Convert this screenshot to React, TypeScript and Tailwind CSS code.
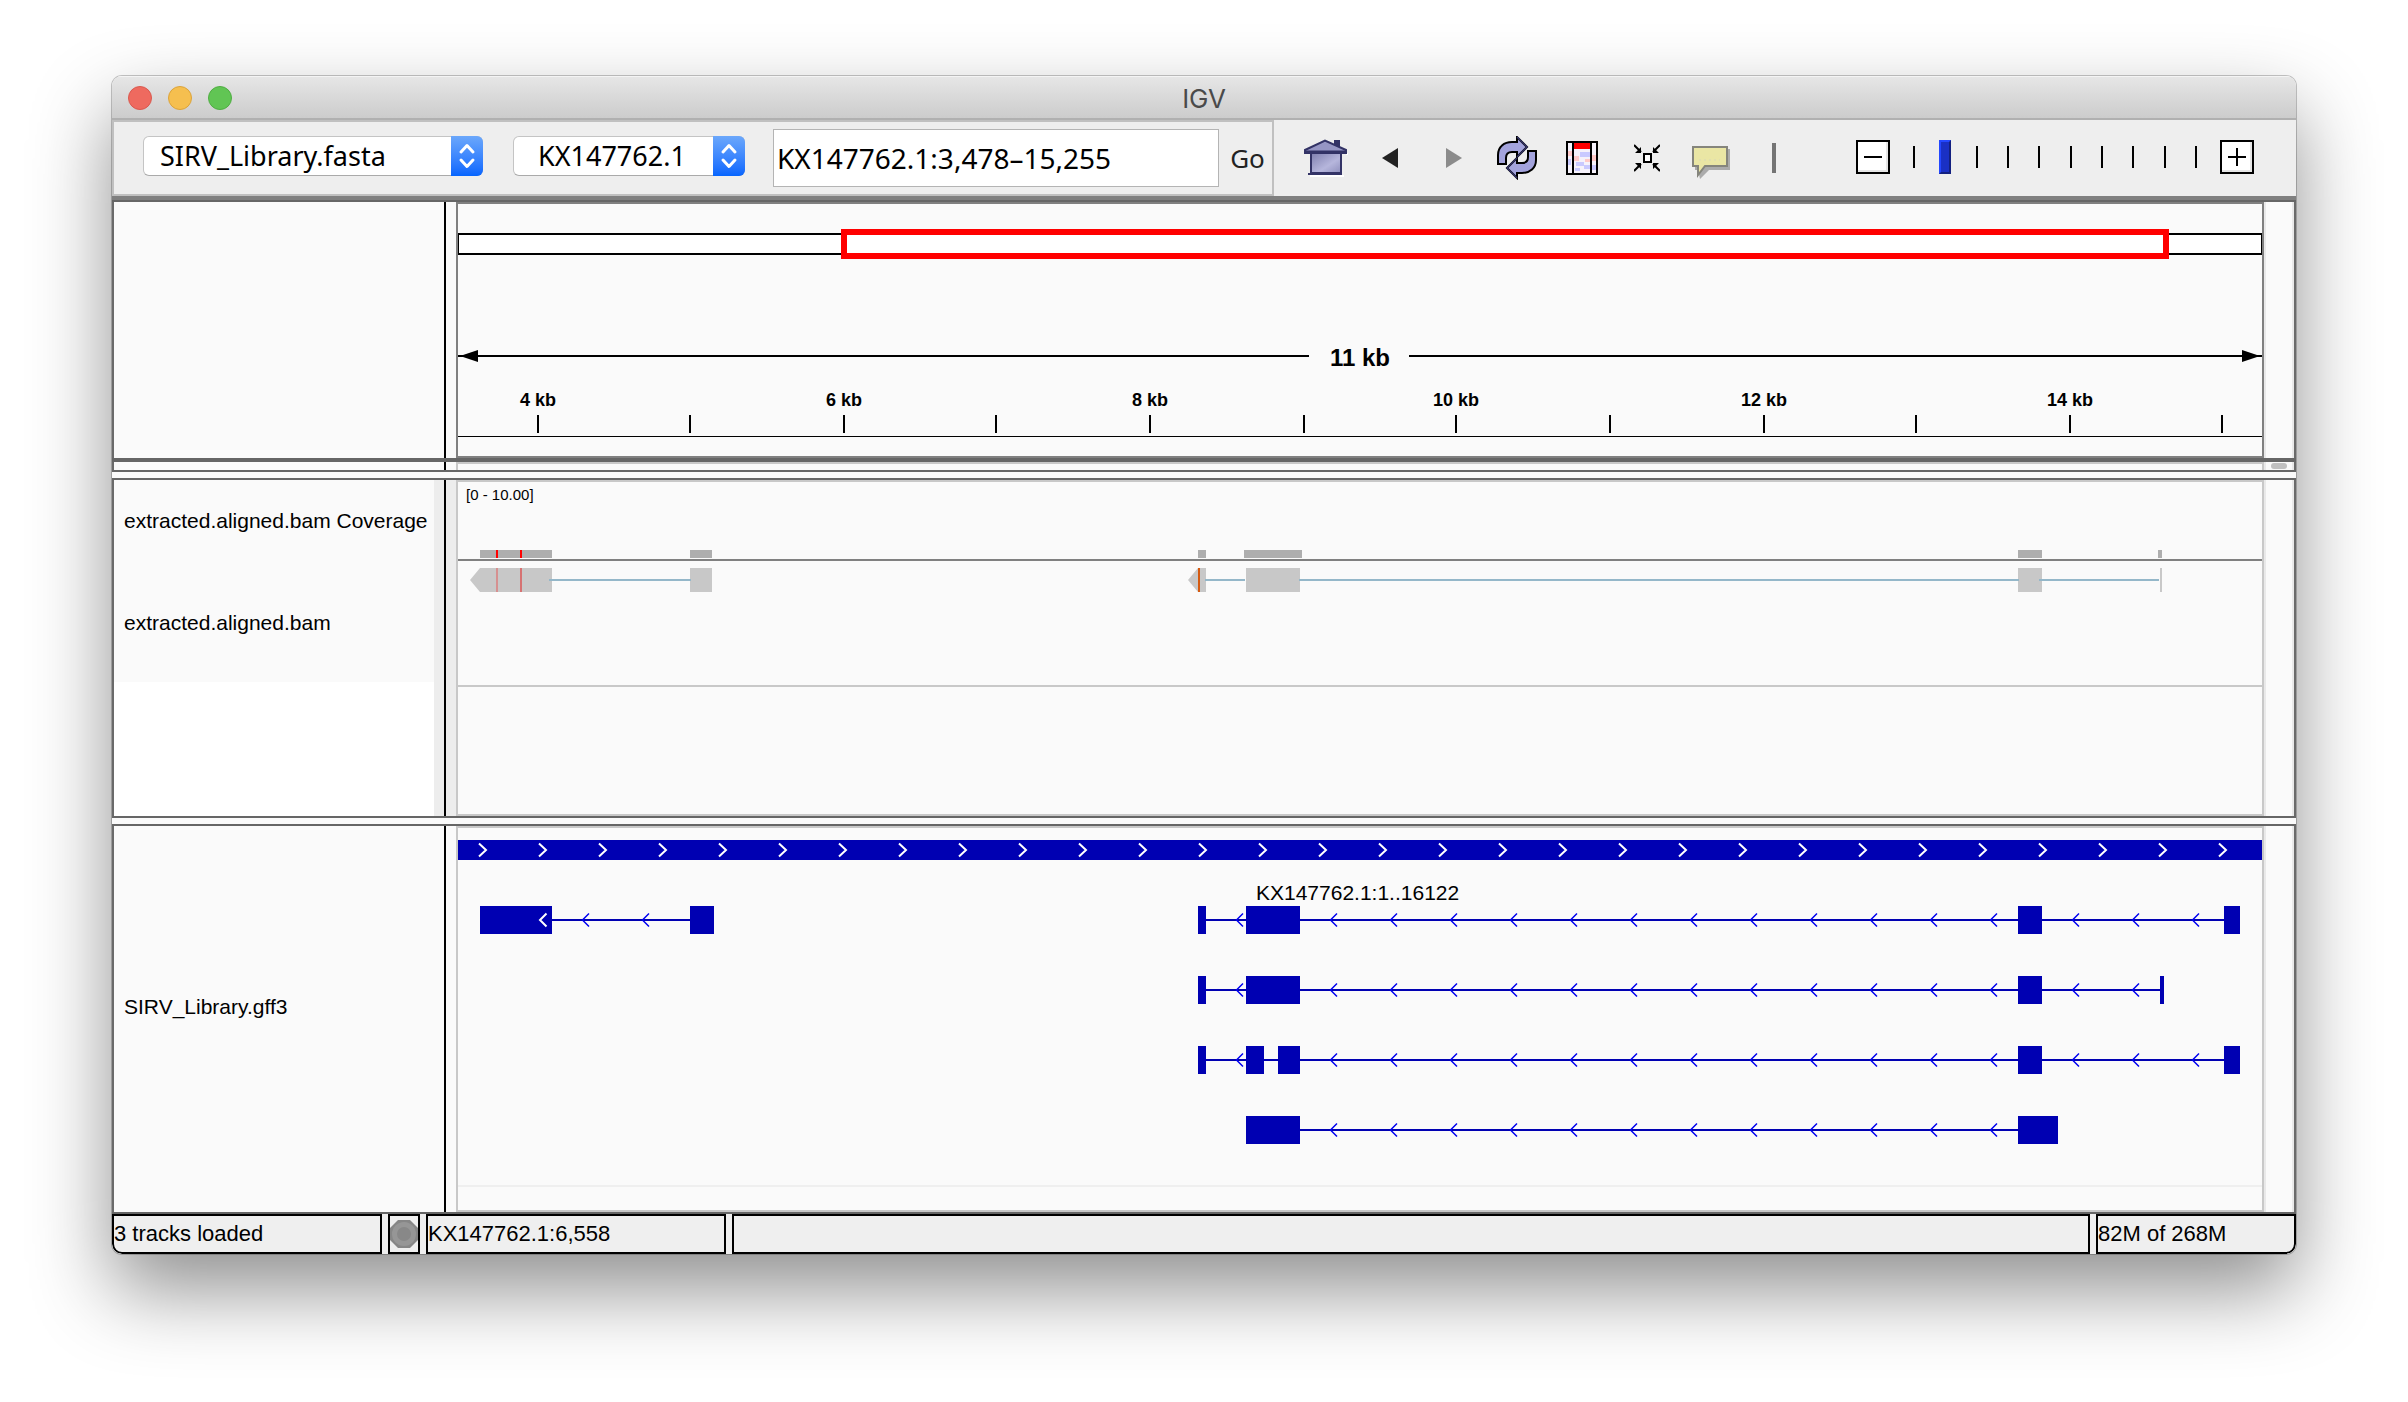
import React from "react";

const GENE = "#0000b2";
const SPAN = 1804;

function pct(x: number) {
  return `${(x / SPAN) * 100}%`;
}

function Stepper() {
  return (
    <span className="pointer-events-none absolute inset-y-0 right-0 flex w-8 items-center justify-center rounded-r-md bg-linear-to-b from-[#6ba7fb] to-[#0465fe]">
      <svg width="18" height="26" viewBox="0 0 18 26" fill="none" stroke="#fff" strokeWidth="3" strokeLinecap="round" strokeLinejoin="round">
        <path d="M3 9 9 2.500 15 9M3 17l6 6.500 6-6.500" />
      </svg>
    </span>
  );
}

function HomeIcon() {
  return (
    <svg width="44" height="38" viewBox="0 0 44 38">
      <defs>
        <linearGradient id="wall" x1="0" y1="0" x2="1" y2="1">
          <stop offset="0" stopColor="#7e7eae" />
          <stop offset="0.600" stopColor="#b6b6dc" />
          <stop offset="1" stopColor="#8e8ebc" />
        </linearGradient>
      </defs>
      <path d="M6 37h34M43 16v-2" stroke="#fff" strokeWidth="2" />
      <path d="M30 1h6v9h-6z" fill="#333366" />
      <path d="M7 14h30v20H7z" fill="url(#wall)" stroke="#333366" strokeWidth="2" />
      <path d="M4 35h34" stroke="#333366" strokeWidth="2" />
      <path d="M1 11 21 1.500 42 11v3H1z" fill="#9696c4" stroke="#333366" strokeWidth="2" />
      <path d="M1 13h41" stroke="#333366" strokeWidth="3" />
    </svg>
  );
}

function RefreshIcon() {
  const arm = "M2 28v-9c0-8 6-13 14-13h5V1l10 10-10 10v-5h-5c-4 0-6 2-6 6v6z";
  return (
    <svg width="44" height="44" viewBox="0 0 44 44" strokeLinejoin="miter">
      <path d={arm} fill="#a3a3dc" stroke="#000" strokeWidth="2" />
      <path d={arm} fill="#a3a3dc" stroke="#000" strokeWidth="2" transform="rotate(180 21 21.500)" />
      <path d="M21 1l10 10-10 10M21 42 11 32l10-10" fill="none" stroke="#333366" strokeWidth="1.500" />
    </svg>
  );
}

function RegionIcon() {
  return (
    <svg width="32" height="34" viewBox="0 0 32 34" shapeRendering="crispEdges">
      <path d="M0 0h32v34H0z" fill="#f6f2fb" />
      <path d="M2 10h4v5H2zM8 15h5v5H8zM26 14h4v6h-4zM19 18h5v3h-5z" fill="#ffc9c9" />
      <path d="M14 11h10v5H14zM10 21h8v4h-8zM18 24h6v4h-6zM2 18h3v6H2zM26 24h4v5h-4zM9 27h5v3H9z" fill="#c9c9ff" />
      <path d="M8 2h16v6H8z" fill="#f00" />
      <path d="M1 1h30v32H1zM7 1v32M25 1v32" fill="none" stroke="#000" strokeWidth="2" />
    </svg>
  );
}

function ShrinkIcon() {
  return (
    <svg width="26" height="28" viewBox="0 0 26 28" fill="none" stroke="#000" strokeWidth="2">
      <path d="M10 10h7v8h-7z" fill="#fff" />
      <path d="m0 1 7 7M26 1l-7 7M0 27l7-7M26 27l-7-7" />
      <path d="M7 3v6H1zM19 3v6h6zM7 25v-6H1zM19 25v-6h6z" fill="#000" stroke="none" />
    </svg>
  );
}

function BubbleIcon() {
  return (
    <svg width="38" height="33" viewBox="0 0 38 33">
      <path d="M3 3h35v21H17l-9 9-2-9H3z" fill="#ababab" />
      <path d="M1 1h34v19H13l-7 9v-9H1z" fill="#eae6a4" stroke="#85857c" strokeWidth="2" />
      <path d="M7 14h21" stroke="#d8d8b8" strokeWidth="1" strokeDasharray="2 3" />
    </svg>
  );
}

function ToolButton({ label, children }: { label: string; children: React.ReactNode }) {
  return (
    <button type="button" aria-label={label} className="flex items-center justify-center">
      {children}
    </button>
  );
}

function Toolbar() {
  return (
    <div className="flex h-[76px] bg-[#eeeeee]">
      <div className="flex items-center border-2 border-[#c0c0c0] pl-[29px] font-[Noto_Sans,sans-serif] text-[27px] leading-9 text-black">
        <div className="relative mr-[30px] mb-1 h-10 w-[340px]">
          <select aria-label="Genome" className="h-10 w-full appearance-none rounded-md border border-[#c4c4c4] border-b-[#aaaaaa] bg-white pl-4">
            <option>SIRV_Library.fasta</option>
          </select>
          <Stepper />
        </div>
        <div className="relative mr-7 mb-1 h-10 w-[232px]">
          <select aria-label="Chromosome" className="h-10 w-full appearance-none rounded-md border border-[#c4c4c4] border-b-[#aaaaaa] bg-white pl-6">
            <option>KX147762.1</option>
          </select>
          <Stepper />
        </div>
        <input
          aria-label="Locus"
          defaultValue="KX147762.1:3,478–15,255"
          className="h-[58px] w-[446px] border border-[#b4b4b4] bg-white pl-[3px] text-[28px]"
        />
        <button type="button" className="w-[53px] pl-1 text-center text-[26px] text-[#222222]">
          Go
        </button>
      </div>

      <div className="flex items-center pl-[30px]">
        <ToolButton label="Home"><HomeIcon /></ToolButton>
        <div className="ml-[34px] flex"><ToolButton label="Back">
          <svg width="16" height="20" viewBox="0 0 16 20"><path d="M0 10 16 0v20z" fill="#222" /></svg>
        </ToolButton></div>
        <div className="ml-12 flex"><ToolButton label="Forward">
          <svg width="16" height="20" viewBox="0 0 16 20"><path d="M16 10 0 0v20z" fill="#8b8b8b" /></svg>
        </ToolButton></div>
        <div className="ml-[34px] flex"><ToolButton label="Refresh"><RefreshIcon /></ToolButton></div>
        <div className="ml-[26px] flex"><ToolButton label="Define a region of interest"><RegionIcon /></ToolButton></div>
        <div className="ml-9 flex"><ToolButton label="Resize tracks to fit"><ShrinkIcon /></ToolButton></div>
        <div className="ml-8 flex pt-2"><ToolButton label="Popup text behavior"><BubbleIcon /></ToolButton></div>
        <div className="ml-[42px] h-[30px] w-1 bg-[#747474]" />
      </div>

      <div className="ml-auto flex items-center pr-[42px] pb-0.5">
        <button type="button" aria-label="Zoom out" className="flex size-[34px] items-center justify-center border-2 border-black bg-white shadow-[inset_-2px_-2px_0_#e6e6e6]">
          <span className="h-0.5 w-[18px] bg-black" />
        </button>
        <div className="relative mx-[18px] h-[34px] w-[294px]">
          <div className="flex h-full items-center justify-between px-[5px]">
            {Array.from({ length: 10 }, (_, i) => (
              <span key={i} className={i === 1 ? "h-[22px] w-0.5" : "h-[22px] w-0.5 bg-black"} />
            ))}
          </div>
          <input
            type="range"
            aria-label="Zoom level"
            min={0}
            max={9}
            defaultValue={1}
            className="absolute inset-0 h-[34px] w-full appearance-none bg-transparent [&::-webkit-slider-thumb]:h-[34px] [&::-webkit-slider-thumb]:w-3 [&::-webkit-slider-thumb]:appearance-none [&::-webkit-slider-thumb]:border-2 [&::-webkit-slider-thumb]:border-t-[#2347ff] [&::-webkit-slider-thumb]:border-r-[#132080] [&::-webkit-slider-thumb]:border-b-[#132080] [&::-webkit-slider-thumb]:border-l-[#2347ff] [&::-webkit-slider-thumb]:bg-[#1a30c4]"
          />
        </div>
        <button type="button" aria-label="Zoom in" className="flex size-[34px] items-center justify-center border-2 border-black bg-white shadow-[inset_-2px_-2px_0_#e6e6e6]">
          <svg width="18" height="18" viewBox="0 0 18 18" stroke="#000" strokeWidth="2"><path d="M0 9h18M9 0v18" /></svg>
        </button>
      </div>
    </div>
  );
}

type PanelProps = {
  names?: React.ReactNode;
  gutter?: string;
  frame: string;
  rail?: React.ReactNode;
  children?: React.ReactNode;
};

function Panel({ names, gutter = "bg-[#fafafa]", frame, rail, children }: PanelProps) {
  return (
    <div className="flex border-x-2 border-[#6a6a6a] bg-[#fafafa]">
      <div className="w-80 shrink-0">{names}</div>
      <div className={`w-2.5 shrink-0 ${gutter}`} />
      <div className="w-0.5 shrink-0 bg-black" />
      <div className={`w-2.5 shrink-0 ${gutter}`} />
      <div className={`relative min-w-0 flex-1 overflow-hidden ${frame}`}>{children}</div>
      <div className="flex w-[30px] shrink-0 items-center justify-center border-x-2 border-[#e9e9e9]">{rail}</div>
    </div>
  );
}

function Plot({ height, children }: { height: number; children: React.ReactNode }) {
  return (
    <svg className="block w-full" height={height} viewBox={`0 0 ${SPAN} ${height}`} preserveAspectRatio="none">
      {children}
    </svg>
  );
}

const TICKS = [79, 231, 385, 537, 691, 845, 997, 1151, 1305, 1457, 1611, 1763];

function Ruler() {
  return (
    <>
      <Plot height={252}>
        <rect x="0" y="29" width="1804" height="22" fill="#000" />
        <rect x="1" y="31" width="1802" height="18" fill="#fff" />
        <rect x="386" y="28" width="1322" height="24" fill="#fff" stroke="#f00" strokeWidth="6" />
        <rect x="0" y="151" width="851" height="2" />
        <rect x="951" y="151" width="853" height="2" />
        <path d="M2 152 20 146v12zM1802 152l-18-6v12z" />
        {TICKS.map((x) => (
          <rect key={x} x={x} y="211" width="2" height="18" />
        ))}
        <rect x="0" y="232" width="1804" height="1" />
      </Plot>
      <span className="absolute top-[140px] left-1/2 -translate-x-1/2 text-2xl leading-7 font-bold whitespace-nowrap">11 kb</span>
      {TICKS.filter((_, i) => i % 2 === 0).map((x, i) => (
        <span key={x} className="absolute top-[184px] -translate-x-1/2 text-lg leading-6 font-bold whitespace-nowrap" style={{ left: pct(x + 1) }}>
          {4 + i * 2} kb
        </span>
      ))}
    </>
  );
}

const COVERAGE = [[22, 72], [232, 22], [740, 8], [786, 58], [1560, 24], [1700, 4]];
const JUNCTIONS = [[91, 142], [747, 40], [841, 720], [1581, 120]];
const READS = [[232, 22], [788, 54], [1560, 24], [1702, 2]];

function Alignments() {
  return (
    <>
      <Plot height={332}>
        {COVERAGE.map(([x, w]) => (
          <rect key={x} x={x} y="68" width={w} height="8" fill="#aeaeae" />
        ))}
        <path d="M38 68h2v8h-2zM62 68h2v8h-2z" fill="#f00" />
        <rect x="0" y="77" width="1804" height="2" fill="#808080" />
        <path d="M12 98 22 86h72v24H22zM730 98l10-12h8v24h-8z" fill="#c8c8c8" />
        {READS.map(([x, w]) => (
          <rect key={x} x={x} y="86" width={w} height="24" fill="#c8c8c8" />
        ))}
        {JUNCTIONS.map(([x, w]) => (
          <rect key={x} x={x} y="97" width={w} height="2" fill="#94b7c9" />
        ))}
        <rect x="38" y="86" width="2" height="24" fill="#d69090" />
        <rect x="62" y="86" width="2" height="24" fill="#d67272" />
        <rect x="740" y="86" width="2" height="24" fill="#d55a10" />
        <rect x="0" y="203" width="1804" height="2" fill="#c8c8c8" />
      </Plot>
      <span className="absolute top-[3px] left-2 text-[15px] leading-5 whitespace-nowrap">[0 - 10.00]</span>
    </>
  );
}

const LONG = Array.from({ length: 12 }, (_, i) => 872 + i * 60);
const TRANSCRIPTS = [
  { y: 78, line: [22, 256], exons: [[22, 72], [232, 24]], arrows: [124, 184] },
  { y: 78, line: [740, 1782], exons: [[740, 8], [788, 54], [1560, 24], [1766, 16]], arrows: [778, ...LONG, 1614, 1674, 1734] },
  { y: 148, line: [740, 1706], exons: [[740, 8], [788, 54], [1560, 24], [1702, 4]], arrows: [778, ...LONG, 1614, 1674] },
  { y: 218, line: [740, 1782], exons: [[740, 8], [788, 18], [820, 22], [1560, 24], [1766, 16]], arrows: [778, ...LONG, 1614, 1674, 1734] },
  { y: 288, line: [788, 1600], exons: [[788, 54], [1560, 40]], arrows: LONG },
];

function Genes() {
  return (
    <>
      <Plot height={382}>
        <rect x="0" y="12" width="1804" height="20" fill={GENE} />
        {Array.from({ length: 30 }, (_, i) => (
          <path key={i} d={`M${21 + i * 60} 15.500l7 6.500-7 6.500`} fill="none" stroke="#fff" strokeWidth="2" />
        ))}
        {TRANSCRIPTS.map((t, n) => (
          <g key={n}>
            <rect x={t.line[0]} y={t.y + 13} width={t.line[1] - t.line[0]} height="2" fill={GENE} />
            {t.exons.map(([x, w]) => (
              <rect key={x} x={x} y={t.y} width={w} height="28" fill={GENE} />
            ))}
            {t.arrows.map((x) => (
              <path key={x} d={`M${x + 7} ${t.y + 7.5}l-6.500 6.500 6.500 6.500`} fill="none" stroke="#0000f0" strokeWidth="1.500" />
            ))}
          </g>
        ))}
        <path d="M88.500 85.500 82 92l6.500 6.500" fill="none" stroke="#fff" strokeWidth="2" />
        <rect x="0" y="357" width="1804" height="2" fill="#efefef" />
      </Plot>
      <span className="absolute top-[53px] text-[21px] leading-6 whitespace-nowrap" style={{ left: pct(798) }}>
        KX147762.1:1..16122
      </span>
    </>
  );
}

function Gap() {
  return <div className="h-2.5 border-y-2 border-[#666666] bg-[#fafafa]" />;
}

export default function App() {
  return (
    <div className="min-h-screen bg-white px-28 pt-[76px] pb-[148px] font-[Liberation_Sans,Arial,sans-serif] text-[21px] leading-6 text-black">
      <div className="rounded-[10px] shadow-[0_0_0_1px_rgba(0,0,0,0.22),0_36px_80px_rgba(0,0,0,0.44)]">
        <main className="overflow-hidden rounded-[10px] bg-[#efefef]">
          <header className="relative flex h-11 items-center justify-center border-t border-b-2 border-t-[#f4f4f4] border-b-[#b0b0b0] bg-linear-to-b from-[#e6e6e6] to-[#cccccc]">
            <div className="absolute inset-y-0 left-4 flex items-center gap-4">
              <button type="button" aria-label="Close" className="size-6 rounded-full border border-[#d9594f] bg-[#ee6a5f]" />
              <button type="button" aria-label="Minimize" className="size-6 rounded-full border border-[#dba33b] bg-[#f5bf4f]" />
              <button type="button" aria-label="Zoom" className="size-6 rounded-full border border-[#50ad43] bg-[#61c554]" />
            </div>
            <h1 className="pt-0.5 font-[Inter,sans-serif] text-[26px] text-[#4a4a4a]">IGV</h1>
          </header>

          <Toolbar />
          <div className="h-1.5 border-b-2 border-[#666666] bg-[#808080]" />

          <Panel frame="border-2 border-[#808080]">
            <Ruler />
          </Panel>
          <div className="h-1 bg-[#666666]" />
          <Panel frame="h-2 border-2 border-b-0 border-[#c8c8c8]" rail={<span className="h-1.5 w-4 rounded-full bg-[#c0c0c0]" />} />
          <Gap />
          <Panel
            gutter="bg-[#ededed]"
            frame="border-2 border-[#c8c8c8]"
            names={
              <div className="flex h-full flex-col">
                <div className="flex h-20 items-center pt-0.5 pl-2.5">extracted.aligned.bam Coverage</div>
                <div className="flex h-[122px] items-center pt-1 pl-2.5">extracted.aligned.bam</div>
                <div className="flex-1 bg-white" />
              </div>
            }
          >
            <Alignments />
          </Panel>
          <Gap />
          <Panel
            frame="border-2 border-[#c8c8c8]"
            names={<div className="flex h-[362px] items-center pl-2.5">SIRV_Library.gff3</div>}
          >
            <Genes />
          </Panel>

          <footer className="border-t-2 border-[#666666] text-[22px]">
            <div className="flex h-10 gap-1.5 [&>div]:flex [&>div]:items-center [&>div]:border-2 [&>div]:border-black">
              <div className="w-[270px] rounded-bl-[10px]">3 tracks loaded</div>
              <div className="w-8 justify-center">
                <svg width="28" height="28" viewBox="0 0 28 28">
                  <path d="M8 0h12l8 8v12l-8 8H8l-8-8V8z" fill="#868686" />
                  <circle cx="14" cy="14" r="12" fill="#969696" />
                  <circle cx="14" cy="14" r="7" fill="#888888" />
                </svg>
              </div>
              <div className="w-[300px]">KX147762.1:6,558</div>
              <div className="flex-1" />
              <div className="w-[200px] rounded-br-[10px]">82M of 268M</div>
            </div>
          </footer>
        </main>
      </div>
    </div>
  );
}
